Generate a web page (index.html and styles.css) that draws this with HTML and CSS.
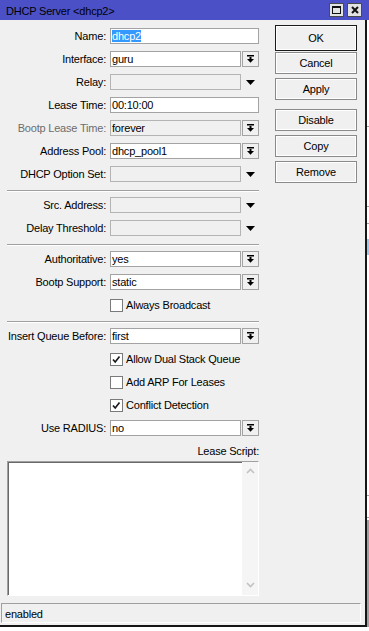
FILE: index.html
```html
<!DOCTYPE html>
<html lang="en">
<head>
    <title>DHCP Server &lt;dhcp2&gt;</title>
    <link rel="stylesheet" href="styles.css">
</head>
<body>
    <div class="window">
        <div class="titlebar">
            <span class="title">DHCP Server &lt;dhcp2&gt;</span>
            <div class="title-buttons">
                <span class="tbtn">
                    <svg width="9" height="8" viewBox="0 0 9 8"><rect x="0.5" y="0.5" width="8" height="7" fill="none" stroke="#111"/><rect x="0" y="0" width="9" height="2" fill="#111"/></svg>
                </span>
                <span class="tbtn">
                    <svg width="8" height="8" viewBox="0 0 8 8"><path d="M1 1 L7 7 M7 1 L1 7" stroke="#111" stroke-width="2"/></svg>
                </span>
            </div>
        </div>
        <div class="frame">
            <div class="panel">
                <div class="content">
                    <div class="form">
                        <div class="row">
                            <span class="label">Name:</span>
                            <div class="field"><div class="input"><span class="sel">dhcp2</span></div></div>
                        </div>
                        <div class="row">
                            <span class="label">Interface:</span>
                            <div class="field"><div class="input">guru</div><span class="drop"><svg width="7" height="8" viewBox="0 0 7 8"><rect x="0" y="0" width="7" height="1.5" fill="#000"/><rect x="2.5" y="2" width="2" height="2" fill="#000"/><polygon points="0,4 7,4 3.5,7.8" fill="#000"/></svg></span></div>
                        </div>
                        <div class="row">
                            <span class="label">Relay:</span>
                            <div class="field"><div class="input off"></div><span class="arrow"><svg width="9" height="5" viewBox="0 0 9 5"><polygon points="0,0 9,0 4.5,5" fill="#000"/></svg></span></div>
                        </div>
                        <div class="row">
                            <span class="label">Lease Time:</span>
                            <div class="field"><div class="input">00:10:00</div></div>
                        </div>
                        <div class="row">
                            <span class="label disabled">Bootp Lease Time:</span>
                            <div class="field"><div class="input off">forever</div><span class="drop"><svg width="7" height="8" viewBox="0 0 7 8"><rect x="0" y="0" width="7" height="1.5" fill="#000"/><rect x="2.5" y="2" width="2" height="2" fill="#000"/><polygon points="0,4 7,4 3.5,7.8" fill="#000"/></svg></span></div>
                        </div>
                        <div class="row">
                            <span class="label">Address Pool:</span>
                            <div class="field"><div class="input">dhcp_pool1</div><span class="drop"><svg width="7" height="8" viewBox="0 0 7 8"><rect x="0" y="0" width="7" height="1.5" fill="#000"/><rect x="2.5" y="2" width="2" height="2" fill="#000"/><polygon points="0,4 7,4 3.5,7.8" fill="#000"/></svg></span></div>
                        </div>
                        <div class="row">
                            <span class="label">DHCP Option Set:</span>
                            <div class="field"><div class="input off"></div><span class="arrow"><svg width="9" height="5" viewBox="0 0 9 5"><polygon points="0,0 9,0 4.5,5" fill="#000"/></svg></span></div>
                        </div>
                        <div class="sep"></div>
                        <div class="row">
                            <span class="label">Src. Address:</span>
                            <div class="field"><div class="input off"></div><span class="arrow"><svg width="9" height="5" viewBox="0 0 9 5"><polygon points="0,0 9,0 4.5,5" fill="#000"/></svg></span></div>
                        </div>
                        <div class="row">
                            <span class="label">Delay Threshold:</span>
                            <div class="field"><div class="input off"></div><span class="arrow"><svg width="9" height="5" viewBox="0 0 9 5"><polygon points="0,0 9,0 4.5,5" fill="#000"/></svg></span></div>
                        </div>
                        <div class="sep"></div>
                        <div class="row">
                            <span class="label">Authoritative:</span>
                            <div class="field"><div class="input">yes</div><span class="drop"><svg width="7" height="8" viewBox="0 0 7 8"><rect x="0" y="0" width="7" height="1.5" fill="#000"/><rect x="2.5" y="2" width="2" height="2" fill="#000"/><polygon points="0,4 7,4 3.5,7.8" fill="#000"/></svg></span></div>
                        </div>
                        <div class="row">
                            <span class="label">Bootp Support:</span>
                            <div class="field"><div class="input">static</div><span class="drop"><svg width="7" height="8" viewBox="0 0 7 8"><rect x="0" y="0" width="7" height="1.5" fill="#000"/><rect x="2.5" y="2" width="2" height="2" fill="#000"/><polygon points="0,4 7,4 3.5,7.8" fill="#000"/></svg></span></div>
                        </div>
                        <div class="row">
                            <span class="label"></span>
                            <div class="check"><span class="box"></span>Always Broadcast</div>
                        </div>
                        <div class="sep"></div>
                        <div class="row">
                            <span class="label">Insert Queue Before:</span>
                            <div class="field"><div class="input">first</div><span class="drop"><svg width="7" height="8" viewBox="0 0 7 8"><rect x="0" y="0" width="7" height="1.5" fill="#000"/><rect x="2.5" y="2" width="2" height="2" fill="#000"/><polygon points="0,4 7,4 3.5,7.8" fill="#000"/></svg></span></div>
                        </div>
                        <div class="row">
                            <span class="label"></span>
                            <div class="check"><span class="box"><svg width="11" height="11" viewBox="0 0 11 11"><path d="M2 5.5 L4.2 8 L8.5 2.5" fill="none" stroke="#1a1a1a" stroke-width="1.7"/></svg></span>Allow Dual Stack Queue</div>
                        </div>
                        <div class="row">
                            <span class="label"></span>
                            <div class="check"><span class="box"></span>Add ARP For Leases</div>
                        </div>
                        <div class="row">
                            <span class="label"></span>
                            <div class="check"><span class="box"><svg width="11" height="11" viewBox="0 0 11 11"><path d="M2 5.5 L4.2 8 L8.5 2.5" fill="none" stroke="#1a1a1a" stroke-width="1.7"/></svg></span>Conflict Detection</div>
                        </div>
                        <div class="row">
                            <span class="label">Use RADIUS:</span>
                            <div class="field"><div class="input">no</div><span class="drop"><svg width="7" height="8" viewBox="0 0 7 8"><rect x="0" y="0" width="7" height="1.5" fill="#000"/><rect x="2.5" y="2" width="2" height="2" fill="#000"/><polygon points="0,4 7,4 3.5,7.8" fill="#000"/></svg></span></div>
                        </div>
                    </div>
                    <div class="actions">
                        <div class="btn default">OK</div>
                        <div class="btn">Cancel</div>
                        <div class="btn">Apply</div>
                        <div class="btn spaced">Disable</div>
                        <div class="btn">Copy</div>
                        <div class="btn">Remove</div>
                    </div>
                </div>
                <div class="script-label">Lease Script:</div>
                <div class="script">
                    <div class="scroll">
                        <svg width="9" height="6" viewBox="0 0 9 6"><path d="M1 5 L4.5 1.5 L8 5" fill="none" stroke="#c2c2c2" stroke-width="1.6"/></svg>
                        <svg width="9" height="6" viewBox="0 0 9 6"><path d="M1 1 L4.5 4.5 L8 1" fill="none" stroke="#c2c2c2" stroke-width="1.6"/></svg>
                    </div>
                </div>
                <div class="status">enabled</div>
            </div>
            <div class="outside">
                <div class="o-white" style="height: 106px"></div>
                <div class="o-line"></div>
                <div class="o-white" style="height: 79px"></div>
                <div class="o-line"></div>
                <div class="o-white" style="height: 16px"></div>
                <div class="o-line"></div>
                <div class="o-white" style="height: 15px"></div>
                <div class="o-blue"></div>
                <div class="o-white" style="height: 240px"></div>
                <div class="o-line"></div>
                <div class="o-white" style="height: 21px"></div>
                <div class="o-line"></div>
                <div class="o-white" style="height: 2px"></div>
                <div class="o-gray"></div>
            </div>
        </div>
        <div class="below"></div>
    </div>
</body>
</html>
```

FILE: styles.css
```css
body {
    margin: 0;
    background-color: #fff;
    font-family: "Liberation Sans", Arial, sans-serif;
    font-size: 11px;
    letter-spacing: -0.2px;
    color: #000;
}
.window {
    width: 369px;
    height: 631px;
    overflow: hidden;
}
.titlebar {
    height: 20px;
    background-color: #4b50c6;
    display: flex;
    align-items: flex-start;
}
.title {
    flex: 1;
    padding: 2px 0 0 6px;
    line-height: 18px;
    white-space: nowrap;
}
.title-buttons {
    display: flex;
    gap: 3px;
    margin: 3px 7px 0 0;
}
.tbtn {
    width: 15px;
    height: 14px;
    box-sizing: border-box;
    border: 1px solid #4a4a4a;
    background-color: #e3e3e3;
    display: flex;
    align-items: center;
    justify-content: center;
}
.frame {
    display: flex;
}
.panel {
    width: 365px;
    background-color: #f0f0f0;
    border-right: 2px solid #161616;
    border-bottom: 2px solid #161616;
    padding: 6px 0 2px;
}
.content {
    display: flex;
    align-items: flex-start;
}
.form {
    width: 259px;
    padding-top: 2px;
    display: flex;
    flex-direction: column;
    gap: 7px;
}
.row {
    display: flex;
    height: 16px;
    align-items: center;
}
.label {
    flex: 0 0 106px;
    margin-right: 4px;
    text-align: right;
    line-height: 16px;
    white-space: nowrap;
}
.label.disabled {
    color: #6d6d6d;
}
.field {
    flex: 1;
    display: flex;
    gap: 1px;
    height: 16px;
}
.input {
    flex: 1;
    height: 16px;
    box-sizing: border-box;
    border: 1px solid #a3a3a3;
    background-color: #fff;
    padding-left: 1px;
    line-height: 14px;
    white-space: nowrap;
}
.input.off {
    background-color: #f0f0f0;
    border-color: #b4b4b4;
}
.sel {
    background-color: #3399ff;
    color: #fff;
}
.drop {
    width: 17px;
    height: 16px;
    box-sizing: border-box;
    border: 1px solid #a3a3a3;
    display: flex;
    align-items: center;
    justify-content: center;
}
.arrow {
    width: 17px;
    display: flex;
    align-items: center;
    justify-content: center;
}
.sep {
    margin: 1px 0 -2px 7px;
    border-top: 1px solid #a0a0a0;
    border-bottom: 1px solid #fff;
}
.check {
    display: flex;
    align-items: center;
    line-height: 16px;
    white-space: nowrap;
}
.box {
    width: 13px;
    height: 13px;
    box-sizing: border-box;
    border: 1px solid #7a7a7a;
    background-color: #fff;
    margin-right: 3px;
    display: flex;
    align-items: center;
    justify-content: center;
}
.actions {
    width: 82px;
    margin-left: 16px;
    display: flex;
    flex-direction: column;
}
.btn {
    height: 22px;
    box-sizing: border-box;
    margin-top: 4px;
    border: 1px solid #8a8a8a;
    box-shadow: inset 0 0 0 1px #fff;
    background-color: #f0f0f0;
    text-align: center;
    line-height: 20px;
}
.btn.default {
    height: 26px;
    margin-top: -1px;
    border-color: #1a1a1a;
    line-height: 24px;
}
.btn.default + .btn {
    margin-top: 1px;
}
.btn.spaced {
    margin-top: 9px;
}
.script-label {
    width: 259px;
    margin-top: 7px;
    text-align: right;
    line-height: 16px;
}
.script {
    width: 252px;
    height: 135px;
    box-sizing: border-box;
    margin: 2px 0 0 7px;
    border: 1px solid;
    border-color: #a0a0a0 #fff #fff #a0a0a0;
    box-shadow: inset 1px 1px 0 #696969;
    background-color: #fff;
    display: flex;
    justify-content: flex-end;
}
.scroll {
    width: 16px;
    background-color: #f5f5f5;
    padding: 6px 0 7px;
    display: flex;
    flex-direction: column;
    justify-content: space-between;
    align-items: center;
}
.status {
    width: 360px;
    height: 20px;
    box-sizing: border-box;
    margin: 7px 0 0 1px;
    border: 1px solid;
    border-color: #a0a0a0 #fff #fff #a0a0a0;
    padding: 1px 0 0 3px;
    line-height: 18px;
}
.outside {
    width: 2px;
    display: flex;
    flex-direction: column;
    background-color: #fff;
}
.o-line {
    height: 1px;
    background-color: #a0a0a0;
}
.o-blue {
    height: 16px;
    background-color: #99c9ef;
}
.o-gray {
    flex: 1;
    background-color: #a0a0a0;
}
.below {
    height: 4px;
    background-color: #fff;
}
```
